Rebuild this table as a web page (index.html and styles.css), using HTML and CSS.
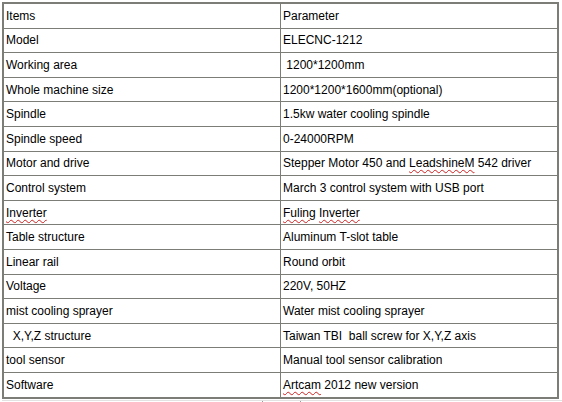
FILE: index.html
```html
<!DOCTYPE html>
<html>
<head>
<meta charset="utf-8">
<link rel="stylesheet" href="styles.css">
</head>
<body>
<table class="spec">
<tr><td>Items</td><td>Parameter</td></tr>
<tr><td>Model</td><td>ELECNC-1212</td></tr>
<tr><td>Working area</td><td>&nbsp;1200*1200mm</td></tr>
<tr><td>Whole machine size</td><td>1200*1200*1600mm(optional)</td></tr>
<tr><td>Spindle</td><td>1.5kw water cooling spindle</td></tr>
<tr><td>Spindle speed</td><td>0-24000RPM</td></tr>
<tr><td>Motor and drive</td><td>Stepper Motor 450 and <span class="sp">LeadshineM</span> 542 driver</td></tr>
<tr><td>Control system</td><td>March 3 control system with USB port</td></tr>
<tr><td><span class="sp">Inverter</span></td><td><span class="sp">Fuling</span> <span class="sp">Inverter</span></td></tr>
<tr><td>Table structure</td><td>Aluminum T-slot table</td></tr>
<tr><td>Linear rail</td><td>Round orbit</td></tr>
<tr><td>Voltage</td><td>220V, 50HZ</td></tr>
<tr><td>mist cooling sprayer</td><td>Water mist cooling sprayer</td></tr>
<tr><td>&nbsp; X,Y,Z structure</td><td>Taiwan TBI&nbsp; ball screw for X,Y,Z axis</td></tr>
<tr><td>tool sensor</td><td>Manual tool sensor calibration</td></tr>
<tr><td>Software</td><td><span class="sp">Artcam</span> 2012 new version</td></tr>
</table>
<div class="ruler"><span class="tick t1"></span><span class="tick t2"></span></div>
</body>
</html>
```
FILE: styles.css
```css
html, body {
  margin: 0;
  padding: 0;
  background: #ffffff;
}
body {
  padding: 2px 0 0 2px;
  font-family: "Liberation Sans", Arial, sans-serif;
  font-size: 12px;
  color: #000;
}
.spec {
  border-collapse: collapse;
  width: 557px;
  table-layout: fixed;
  border: 2px solid #7d7d78;
}
.spec td {
  border: 1px solid #7d7d78;
  height: 23.6px;
  padding: 0 0 0 2px;
  vertical-align: middle;
  white-space: nowrap;
  line-height: 14px;
}
.sp {
  text-decoration: underline wavy #d02020;
  text-decoration-thickness: 1px;
  text-underline-offset: 2px;
}
.ruler {
  position: relative;
  height: 3px;
  margin-top: 1px;
  border-top: 1px solid #e2e2e2;
}
.tick {
  position: absolute;
  top: 0;
  width: 1px;
  height: 3px;
  background: #9a9a9a;
}
.t1 { left: 260px; }
.t2 { left: 298px; }
```
